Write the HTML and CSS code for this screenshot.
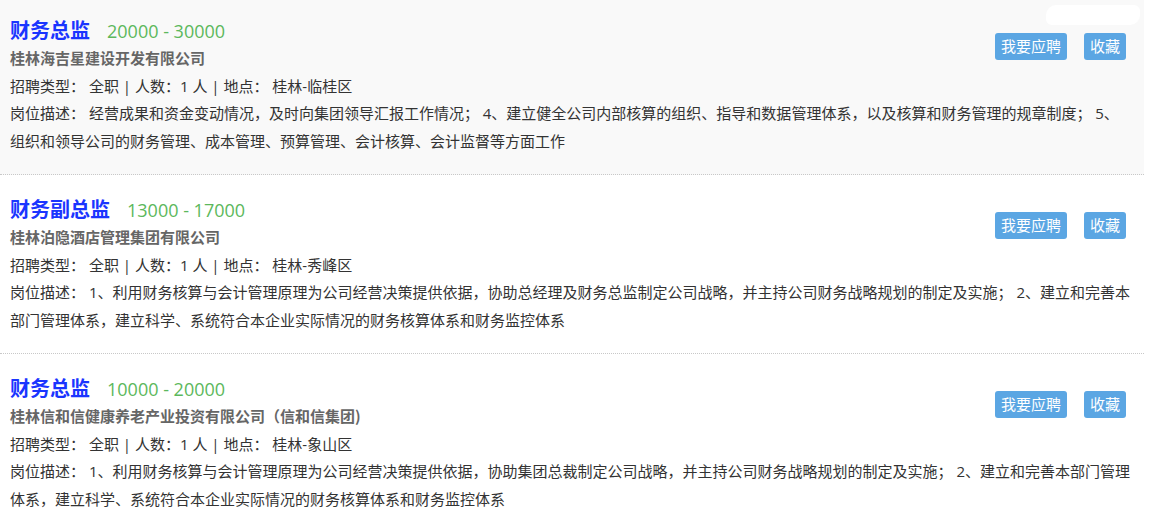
FILE: index.html
```html
<!DOCTYPE html>
<html lang="zh-CN">
<head>
<meta charset="utf-8">
<title>职位列表</title>
<link rel="stylesheet" href="styles.css">
</head>
<body>
<div class="page">
  <ul class="jobs">
    <li class="job job-active">
      <div class="job-main">
        <div class="job-head"><a class="job-title">财务总监</a><span class="salary">20000 - 30000</span></div>
        <div class="company">桂林海吉星建设开发有限公司</div>
        <div class="info">招聘类型： 全职 | 人数：1 人 | 地点： 桂林-临桂区</div>
        <div class="desc">岗位描述： 经营成果和资金变动情况，及时向集团领导汇报工作情况； 4、建立健全公司内部核算的组织、指导和数据管理体系，以及核算和财务管理的规章制度； 5、组织和领导公司的财务管理、成本管理、预算管理、会计核算、会计监督等方面工作</div>
      </div>
      <div class="actions"><a class="btn">我要应聘</a><a class="btn">收藏</a></div>
      <span class="mask"></span>
    </li>
    <li class="job">
      <div class="job-main">
        <div class="job-head"><a class="job-title">财务副总监</a><span class="salary">13000 - 17000</span></div>
        <div class="company">桂林泊隐酒店管理集团有限公司</div>
        <div class="info">招聘类型： 全职 | 人数：1 人 | 地点： 桂林-秀峰区</div>
        <div class="desc">岗位描述： 1、利用财务核算与会计管理原理为公司经营决策提供依据，协助总经理及财务总监制定公司战略，并主持公司财务战略规划的制定及实施； 2、建立和完善本部门管理体系，建立科学、系统符合本企业实际情况的财务核算体系和财务监控体系</div>
      </div>
      <div class="actions"><a class="btn">我要应聘</a><a class="btn">收藏</a></div>
    </li>
    <li class="job">
      <div class="job-main">
        <div class="job-head"><a class="job-title">财务总监</a><span class="salary">10000 - 20000</span></div>
        <div class="company">桂林信和信健康养老产业投资有限公司（信和信集团)</div>
        <div class="info">招聘类型： 全职 | 人数：1 人 | 地点： 桂林-象山区</div>
        <div class="desc">岗位描述： 1、利用财务核算与会计管理原理为公司经营决策提供依据，协助集团总裁制定公司战略，并主持公司财务战略规划的制定及实施； 2、建立和完善本部门管理体系，建立科学、系统符合本企业实际情况的财务核算体系和财务监控体系</div>
      </div>
      <div class="actions"><a class="btn">我要应聘</a><a class="btn">收藏</a></div>
    </li>
  </ul>
</div>
</body>
</html>
```

FILE: styles.css
```css
html, body {
  margin: 0;
  padding: 0;
  background: #fff;
}
body {
  font-family: "Open Sans", "Noto Sans CJK SC", sans-serif;
  font-size: 15px;
  color: #333;
  overflow: hidden;
}
.page {
  width: 1144px;
  margin-top: -4px;
}
.jobs {
  list-style: none;
  margin: 0;
  padding: 0;
}
.job {
  position: relative;
  display: flex;
  padding: 20px 12px 18px 10px;
  border-bottom: 1px dotted #c8c8c8;
  height: 140px;
}
.job-active {
  background: #f9f9f9;
}
.job-main {
  flex: 1;
  min-width: 0;
}
.job-head {
  display: flex;
  align-items: baseline;
  height: 28px;
  line-height: 28px;
}
.job-title {
  font-family: "Noto Sans CJK SC", sans-serif;
  font-size: 20px;
  font-weight: bold;
  color: #1a35ff;
  margin-right: 17px;
}
.salary {
  font-size: 18px;
  color: #5cb85c;
}
.company {
  font-family: "Noto Sans CJK SC", sans-serif;
  font-weight: bold;
  color: #666;
  line-height: 28px;
}
.info {
  line-height: 28px;
  color: #333;
}
.desc {
  line-height: 27.5px;
  color: #333;
}
.actions {
  position: absolute;
  top: 37px;
  right: 18px;
  display: flex;
  gap: 17px;
}
.btn {
  display: block;
  height: 27px;
  line-height: 27px;
  padding: 0 6px;
  background: #5ba6e3;
  color: #fff;
  border-radius: 3px;
  font-size: 15px;
}
.mask {
  position: absolute;
  top: 9px;
  right: 4px;
  width: 94px;
  height: 20px;
  background: #fff;
  border-radius: 10px 6px 10px 6px;
}
```
